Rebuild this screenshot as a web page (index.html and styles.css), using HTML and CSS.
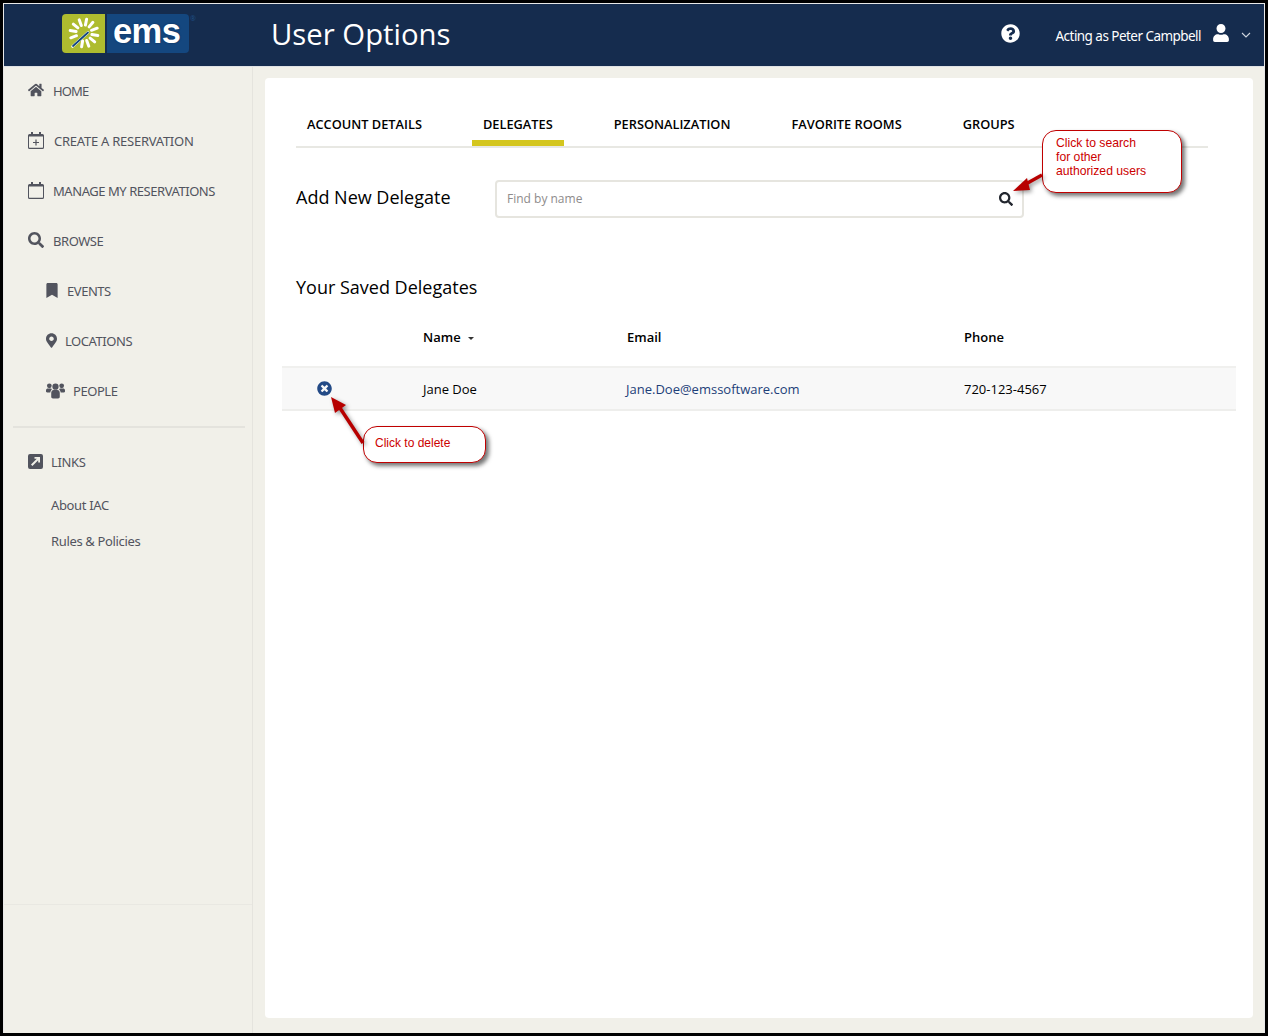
FILE: index.html
```html
<!DOCTYPE html>
<html lang="en">
<head>
  <meta charset="UTF-8">
  <title>User Options</title>
  <link rel="stylesheet" href="styles.css">
</head>
<body>
<div class="app">

  <header class="topbar">
    <div class="logo-wrap">
      <div class="logo-mark">
        <svg width="43" height="39" viewBox="0 0 43 39">
          <g stroke="#fff" stroke-width="3" stroke-linecap="round">
            <path d="M23.4 11.1L24.6 5.2"/><path d="M27.1 12.9L30.9 8.3"/><path d="M29.5 16.3L35.2 14.2"/><path d="M29.9 20.4L35.8 21.4"/>
            <path d="M28.1 24.1L32.7 27.9"/><path d="M24.7 26.5L26.8 32.2"/><path d="M20.6 26.9L19.6 32.8"/>
            <path d="M14.5 21.7L8.8 23.8"/><path d="M14.1 17.6L8.2 16.6"/><path d="M15.9 13.9L11.3 10.1"/><path d="M19.3 11.5L17.2 5.8"/>
          </g>
          <path d="M10.5 32.5L26 18.5" stroke="#fff" stroke-width="2.6" stroke-linecap="round"/>
          <path d="M11 32L26 18.5" stroke="#14477f" stroke-width="1.8" stroke-linecap="round"/>
        </svg>
      </div>
      <div class="logo-name">ems</div>
      <span class="logo-reg">®</span>
    </div>
    <h1 class="page-title">User Options</h1>
    <div class="top-right">
      <svg class="help-icon" viewBox="0 0 512 512"><path fill="#fff" d="M504 256c0 136.997-111.043 248-248 248S8 392.997 8 256C8 119.083 119.043 8 256 8s248 111.083 248 248zM262.655 90c-54.497 0-89.255 22.957-116.549 63.758-3.536 5.286-2.353 12.415 2.715 16.258l34.699 26.31c5.205 3.947 12.621 3.008 16.665-2.122 17.864-22.658 30.113-35.797 57.303-35.797 20.429 0 45.698 13.148 45.698 32.958 0 14.976-12.363 22.667-32.534 33.976C247.128 238.528 216 254.941 216 296v4c0 6.627 5.373 12 12 12h56c6.627 0 12-5.373 12-12v-1.333c0-28.462 83.186-29.647 83.186-106.667 0-58.002-60.165-102-116.531-102zM256 338c-25.365 0-46 20.635-46 46 0 25.364 20.635 46 46 46s46-20.636 46-46c0-25.365-20.635-46-46-46z"/></svg>
      <span class="acting">Acting as Peter Campbell</span>
      <svg class="user-icon" viewBox="0 0 448 512"><path fill="#fff" d="M224 256c70.7 0 128-57.3 128-128S294.7 0 224 0 96 57.3 96 128s57.3 128 128 128zm89.6 32h-16.7c-22.2 10.2-46.9 16-72.9 16s-50.6-5.8-72.9-16h-16.7C60.2 288 0 348.2 0 422.4V464c0 26.5 21.5 48 48 48h352c26.5 0 48-21.5 48-48v-41.6c0-74.2-60.2-134.4-134.4-134.4z"/></svg>
      <svg class="chev" viewBox="0 0 10 6"><path d="M1 1l4 4 4-4" fill="none" stroke="#cfd6df" stroke-width="1.1"/></svg>
    </div>
  </header>

  <div class="body-row">
    <aside class="sidebar">
      <nav class="nav">
        <a class="nav-item">
          <svg class="ico" viewBox="0 0 576 512"><path d="M280.37 148.26L96 300.11V464a16 16 0 0 0 16 16l112.06-.29a16 16 0 0 0 15.92-16V368a16 16 0 0 1 16-16h64a16 16 0 0 1 16 16v95.64a16 16 0 0 0 16 16.05L464 480a16 16 0 0 0 16-16V300L295.67 148.26a12.19 12.19 0 0 0-15.3 0zM571.6 251.47L488 182.56V44.05a12 12 0 0 0-12-12h-56a12 12 0 0 0-12 12v72.61L318.47 43a48 48 0 0 0-61 0L4.34 251.47a12 12 0 0 0-1.6 16.9l25.5 31A12 12 0 0 0 45.15 301l235.22-193.74a12.19 12.19 0 0 1 15.3 0L530.9 301a12 12 0 0 0 16.9-1.6l25.5-31a12 12 0 0 0-1.7-16.93z"/></svg>
          <span class="tight">HOME</span>
        </a>
        <a class="nav-item">
          <svg class="ico ico-cal" viewBox="0 0 16 17"><path fill-rule="evenodd" d="M3 0h2v2h6V0h2v2h1.5A1.5 1.5 0 0 1 16 3.5v12a1.5 1.5 0 0 1-1.5 1.5h-13A1.5 1.5 0 0 1 0 15.5v-12A1.5 1.5 0 0 1 1.5 2H3zM1 4.5v10.8c0 .2.2.4.4.4h13.2c.2 0 .4-.2.4-.4V4.5z"/><path d="M7.4 7.5h1.2v2.4H11v1.2H8.6v2.4H7.4v-2.4H5V9.9h2.4z"/></svg>
          <span class="shift1">CREATE A RESERVATION</span>
        </a>
        <a class="nav-item">
          <svg class="ico ico-cal" viewBox="0 0 16 17"><path fill-rule="evenodd" d="M3 0h2v2h6V0h2v2h1.5A1.5 1.5 0 0 1 16 3.5v12a1.5 1.5 0 0 1-1.5 1.5h-13A1.5 1.5 0 0 1 0 15.5v-12A1.5 1.5 0 0 1 1.5 2H3zM1 4.5v10.8c0 .2.2.4.4.4h13.2c.2 0 .4-.2.4-.4V4.5z"/></svg>
          MANAGE MY RESERVATIONS
        </a>
        <a class="nav-item">
          <svg class="ico" viewBox="0 0 512 512"><path d="M505 442.7L405.3 343c-4.5-4.5-10.6-7-17-7H372c27.6-35.3 44-79.7 44-128C416 93.1 322.9 0 208 0S0 93.1 0 208s93.1 208 208 208c48.3 0 92.7-16.4 128-44v16.3c0 6.4 2.5 12.5 7 17l99.7 99.7c9.4 9.4 24.6 9.4 33.9 0l28.3-28.3c9.4-9.4 9.4-24.6.1-34zM208 336c-70.7 0-128-57.2-128-128 0-70.7 57.2-128 128-128 70.7 0 128 57.2 128 128 0 70.7-57.2 128-128 128z"/></svg>
          BROWSE
        </a>
        <a class="nav-item sub">
          <svg class="ico ico-bookmark" viewBox="0 0 384 512"><path d="M0 512V48C0 21.49 21.49 0 48 0h288c26.51 0 48 21.49 48 48v464L192 400 0 512z"/></svg>
          EVENTS
        </a>
        <a class="nav-item sub">
          <svg class="ico ico-pin" viewBox="0 0 384 512"><path d="M172.268 501.67C26.97 291.031 0 269.413 0 192 0 85.961 85.961 0 192 0s192 85.961 192 192c0 77.413-26.97 99.031-172.268 309.67-9.535 13.774-29.93 13.773-39.464 0zM192 272c44.183 0 80-35.817 80-80s-35.817-80-80-80-80 35.817-80 80 35.817 80 80 80z"/></svg>
          LOCATIONS
        </a>
        <a class="nav-item sub">
          <svg class="ico ico-people" viewBox="0 0 20 17"><circle cx="3.5" cy="3.5" r="2.5"/><circle cx="16.5" cy="3.5" r="2.5"/><circle cx="10" cy="4.5" r="3.3"/><path d="M0 8.5C0 7 1 6.5 2 6.5h3c.6 0 1 .3 1.2.6C5.4 8 4.8 9 4.5 10.5H1.2C.5 10.5 0 10 0 9.500zM20 8.500C20 7 19 6.500 18 6.500h-3c-.6 0-1 .3-1.200.6.800.9 1.400 1.900 1.700 3.400h3.300c.7 0 1.200-.5 1.200-1z"/><path d="M5.5 11c0-1.800 1.200-3 2.500-3h4c1.300 0 2.500 1.200 2.500 3v4.200c0 1-.8 1.800-1.800 1.800H7.300c-1 0-1.800-.8-1.800-1.800z"/></svg>
          PEOPLE
        </a>
      </nav>
      <div class="nav-divider"></div>
      <div class="links">
        <div class="links-head">
          <svg class="ico ico-link" viewBox="0 0 15 15"><path fill-rule="evenodd" d="M2 0h11a2 2 0 0 1 2 2v11a2 2 0 0 1-2 2H2a2 2 0 0 1-2-2V2a2 2 0 0 1 2-2zm4.5 3v1.800h2.300L3 10.600 4.400 12l5.800-5.800v2.300H12V3z"/></svg>
          LINKS
        </div>
        <a class="link">About IAC</a>
        <a class="link">Rules &amp; Policies</a>
      </div>
      <div class="side-foot"></div>
    </aside>

    <main class="content">
      <div class="card">
        <ul class="tabs">
          <li class="tab">ACCOUNT DETAILS</li>
          <li class="tab active">DELEGATES</li>
          <li class="tab">PERSONALIZATION</li>
          <li class="tab">FAVORITE ROOMS</li>
          <li class="tab">GROUPS</li>
        </ul>

        <div class="add-row">
          <h2 class="section-title">Add New Delegate</h2>
          <div class="search-box">
            <span class="placeholder">Find by name</span>
            <svg class="search-icon" viewBox="0 0 512 512"><path d="M505 442.7L405.3 343c-4.5-4.5-10.6-7-17-7H372c27.6-35.3 44-79.7 44-128C416 93.1 322.9 0 208 0S0 93.1 0 208s93.1 208 208 208c48.3 0 92.7-16.4 128-44v16.3c0 6.4 2.5 12.5 7 17l99.7 99.7c9.4 9.4 24.6 9.4 33.9 0l28.3-28.3c9.4-9.4 9.4-24.6.1-34zM208 336c-70.7 0-128-57.2-128-128 0-70.7 57.2-128 128-128 70.7 0 128 57.2 128 128 0 70.7-57.2 128-128 128z"/></svg>
          </div>
        </div>

        <h2 class="section-title saved">Your Saved Delegates</h2>

        <div class="table">
          <div class="t-head">
            <div></div>
            <div>Name <span class="sort"></span></div>
            <div>Email</div>
            <div>Phone</div>
          </div>
          <div class="t-row">
            <div class="del-cell">
              <svg class="del-icon" viewBox="0 0 512 512"><path fill="#234a86" d="M256 8C119 8 8 119 8 256s111 248 248 248 248-111 248-248S393 8 256 8zm121.6 313.1c4.7 4.7 4.7 12.3 0 17L338 377.6c-4.7 4.7-12.3 4.7-17 0L256 312l-65.1 65.6c-4.7 4.7-12.3 4.7-17 0L134.4 338c-4.7-4.7-4.7-12.3 0-17l65.6-65-65.6-65.1c-4.7-4.7-4.7-12.3 0-17l39.6-39.6c4.7-4.7 12.3-4.7 17 0l65 65.7 65.1-65.6c4.7-4.7 12.3-4.7 17 0l39.6 39.6c4.7 4.7 4.7 12.3 0 17L312 256l65.6 65.1z"/></svg>
            </div>
            <div>Jane Doe</div>
            <div class="email">Jane.Doe@emssoftware.com</div>
            <div>720-123-4567</div>
          </div>
        </div>
      </div>
    </main>
  </div>

  <!-- annotations drawn over the screenshot -->
  <div class="note note-search">Click to search<br>for other<br>authorized users</div>
  <svg class="arrow arrow-search" width="36" height="26" viewBox="0 0 36 26"><path d="M33 5 L15 15" stroke="#b70000" stroke-width="3.5"/><path d="M4 21 L18 8 L21 20z" fill="#b70000"/></svg>
  <div class="note note-delete">Click to delete</div>
  <svg class="arrow arrow-delete" width="42" height="56" viewBox="0 0 42 56"><path d="M37 51 L14 16" stroke="#b70000" stroke-width="3.5"/><path d="M5 5 L20 13 L9 21z" fill="#b70000"/></svg>
</div>
</body>
</html>
```

FILE: styles.css
```css
html, body {
  margin: 0;
  height: 100%;
  background: #000;
  overflow: hidden;
}
.app {
  position: relative;
  margin: 3px 3px 0 3px;
  height: 1030px;
  display: flex;
  flex-direction: column;
  border-top: 1px solid #e8e8e8;
  border-right: 1px solid #e8e8e8;
  border-left: 1px solid #e8e8e8;
  box-sizing: border-box;
  background: #f1f0e9;
  font-family: "Open Sans", sans-serif;
}

/* top bar */
.topbar {
  height: 62px;
  flex: none;
  background: #152c4e;
  display: flex;
  align-items: center;
  color: #fff;
  border-bottom: 1px solid #dfe2e5;
}
.logo-wrap {
  display: flex;
  margin-left: 58px;
  width: 209px;
  height: 39px;
  margin-top: -3px;
}
.logo-mark {
  width: 43px;
  height: 39px;
  background: #aebc2f;
  border-radius: 4px 0 0 4px;
  margin-right: 2px;
}
.logo-name {
  width: 82px;
  height: 39px;
  box-sizing: border-box;
  padding-left: 6px;
  background: #14477f;
  border-radius: 0 4px 4px 0;
  font-family: "Liberation Sans", sans-serif;
  font-weight: bold;
  font-size: 34.5px;
  line-height: 35px;
  letter-spacing: -0.6px;
  text-shadow: 0 0 2px #0c2a55;
}
.logo-reg {
  font-size: 7px;
  line-height: 10px;
  margin-left: 1px;
  color: #1f4f86;
}
.page-title {
  margin: -3px 0 0;
  font-size: 29.3px;
  font-weight: 400;
}
.top-right {
  margin-left: auto;
  display: flex;
  align-items: center;
}
.help-icon {
  width: 19px;
  height: 19px;
  margin-right: 36px;
  margin-top: -4px;
}
.acting {
  font-family: "Noto Sans", sans-serif;
  font-size: 13.5px;
  letter-spacing: -0.54px;
  margin-top: 2px;
}
.user-icon {
  width: 16px;
  height: 18px;
  margin-left: 12px;
  margin-top: -5px;
}
.chev {
  width: 10px;
  height: 6px;
  margin: 0 13px 0 12px;
}

/* sidebar */
.body-row {
  flex: 1;
  display: flex;
  min-height: 0;
}
.sidebar {
  width: 249px;
  flex: none;
  box-sizing: border-box;
  border-right: 1px solid #e5e4de;
  display: flex;
  flex-direction: column;
  font-family: "Noto Sans", sans-serif;
  color: #52545e;
}
.nav {
  margin-top: -1px;
}
.nav-item {
  height: 50px;
  display: flex;
  align-items: center;
  padding-left: 24px;
  font-size: 13px;
  letter-spacing: -0.45px;
}
.nav-item.sub {
  padding-left: 42px;
}
.ico {
  width: 16px;
  height: 16px;
  flex: none;
  fill: #52545e;
  margin-right: 9px;
  margin-top: -2px;
}
.ico-cal {
  height: 17px;
}
.shift1 {
  margin-left: 1px;
  letter-spacing: -0.25px;
}
.tight {
  letter-spacing: -0.9px;
}
.ico-bookmark {
  width: 12px;
  height: 15px;
}
.ico-pin {
  width: 11px;
  height: 15px;
  margin-right: 8px;
}
.ico-people {
  width: 19px;
  height: 17px;
  margin-right: 8px;
}
.nav-divider {
  height: 2px;
  background: #e4e3dd;
  margin: 10px 7px 0 9px;
}
.links {
  padding-left: 24px;
  font-size: 13px;
  letter-spacing: -0.35px;
}
.links-head {
  display: flex;
  align-items: center;
  height: 36px;
  margin-top: 16px;
}
.ico-link {
  width: 15px;
  height: 15px;
  margin-right: 8px;
}
.link {
  display: block;
  height: 36px;
  line-height: 36px;
  padding-left: 23px;
}
.links-head + .link {
  margin-top: 7px;
}
.side-foot {
  margin-top: auto;
  margin-bottom: 128px;
  height: 1px;
  background: #e9e8e2;
}

/* main */
.content {
  flex: 1;
  min-width: 0;
  padding: 11px 11px 15px 12px;
  display: flex;
}
.card {
  flex: 1;
  background: #fff;
  border-radius: 4px;
  padding: 0 17px;
  color: #000;
}
.tabs {
  list-style: none;
  margin: 0 28px 0 14px;
  padding: 32px 0 0;
  display: flex;
  gap: 39px;
  border-bottom: 2px solid #e8e8e3;
}
.tab {
  height: 36px;
  padding: 0 11px;
  font-size: 12.8px;
  font-weight: 600;
  line-height: 28px;
  box-sizing: border-box;
  position: relative;
}
.tab.active::after {
  content: "";
  position: absolute;
  left: 0;
  right: 0;
  bottom: 0;
  height: 6px;
  background: #d4c61e;
}
.add-row {
  display: flex;
  align-items: center;
  margin: 32px 0 0 14px;
}
.section-title {
  margin: 0;
  font-size: 18px;
  font-weight: 400;
}
.add-row .section-title {
  width: 199px;
  margin-top: -4px;
}
.search-box {
  width: 529px;
  height: 38px;
  box-sizing: border-box;
  border: 2px solid #e6e5df;
  border-radius: 4px;
  display: flex;
  align-items: center;
  justify-content: space-between;
  padding: 0 9px 0 10px;
}
.placeholder {
  font-size: 12px;
  color: #8e8b8b;
  margin-top: -2px;
}
.search-icon {
  width: 14px;
  height: 14px;
  fill: #22262e;
}
.saved {
  margin: 57px 0 0 14px;
}
.table {
  margin-top: 19px;
  font-size: 13px;
}
.t-head, .t-row {
  display: grid;
  grid-template-columns: 141px 204px 337px 1fr;
  align-items: center;
}
.t-head {
  height: 50px;
  font-weight: 600;
  padding-bottom: 10px;
  box-sizing: border-box;
  border-bottom: 2px solid #f0f0ee;
}
.sort {
  display: inline-block;
  width: 0;
  height: 0;
  margin-left: 4px;
  vertical-align: middle;
  border: 3px solid transparent;
  border-top-color: #333;
  border-bottom: 0;
}
.t-row {
  height: 43px;
  background: #f8f8f8;
  border-bottom: 2px solid #eeeeec;
  box-sizing: border-box;
}
.del-cell {
  display: flex;
  padding-left: 35px;
}
.del-icon {
  width: 15px;
  height: 15px;
}
.email {
  color: #1d3f78;
  margin-left: -1px;
}

/* callouts */
.note {
  position: absolute;
  box-sizing: border-box;
  background: #fff;
  border: 1px solid #c00000;
  border-radius: 14px;
  box-shadow: 3px 3px 4px rgba(0, 0, 0, 0.55);
  color: #cc0000;
  font-family: "Liberation Sans", sans-serif;
  font-size: 12px;
  line-height: 14px;
}
.note-search {
  left: 1038px;
  top: 126px;
  width: 140px;
  height: 63px;
  padding: 5px 13px;
  font-size: 12.2px;
}
.note-delete {
  left: 359px;
  top: 422px;
  width: 123px;
  height: 37px;
  padding: 9px 11px;
}
.arrow {
  position: absolute;
  filter: drop-shadow(2px 2px 2px rgba(0, 0, 0, 0.4));
}
.arrow-search {
  left: 1005px;
  top: 166px;
}
.arrow-delete {
  left: 322px;
  top: 388px;
}
```
